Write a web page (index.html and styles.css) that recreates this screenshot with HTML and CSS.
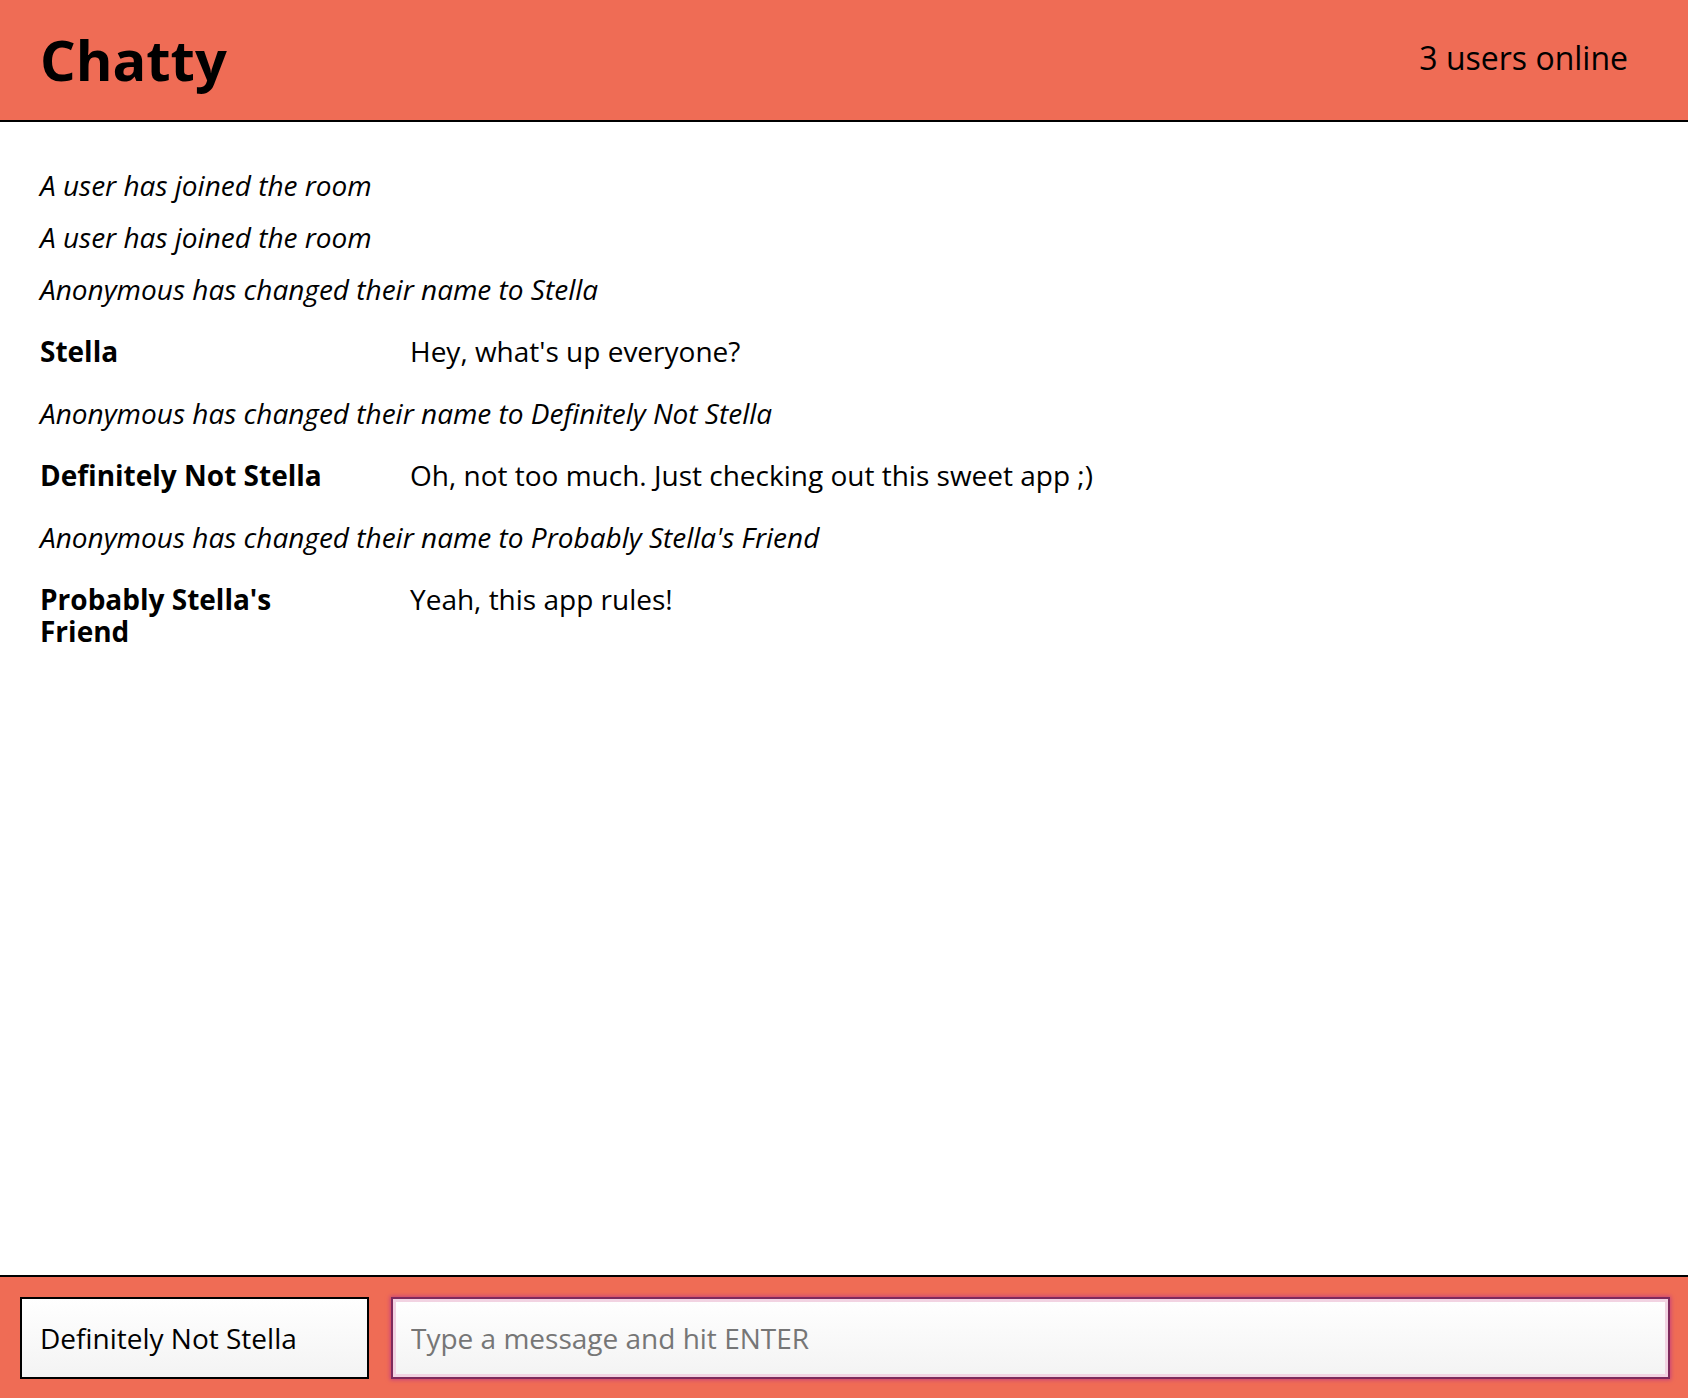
FILE: index.html
```html
<!DOCTYPE html>
<html>
<head>
<meta charset="utf-8">
<title>Chatty</title>
<link rel="stylesheet" href="styles.css">
</head>
<body>
<div class="app">
  <nav class="navbar">
    <a class="brand" href="#">Chatty</a>
    <span class="online">3 users online</span>
  </nav>
  <main class="messages">
    <div class="message system">A user has joined the room</div>
    <div class="message system">A user has joined the room</div>
    <div class="message system">Anonymous has changed their name to Stella</div>
    <div class="message user">
      <span class="username">Stella</span>
      <span class="content">Hey, what's up everyone?</span>
    </div>
    <div class="message system">Anonymous has changed their name to Definitely Not Stella</div>
    <div class="message user">
      <span class="username">Definitely Not Stella</span>
      <span class="content">Oh, not too much. Just checking out this sweet app ;)</span>
    </div>
    <div class="message system">Anonymous has changed their name to Probably Stella's Friend</div>
    <div class="message user">
      <span class="username">Probably Stella's Friend</span>
      <span class="content">Yeah, this app rules!</span>
    </div>
  </main>
  <footer class="chatbar">
    <input class="chatbar-username" type="text" value="Definitely Not Stella">
    <input class="chatbar-message" type="text" placeholder="Type a message and hit ENTER">
  </footer>
</div>
</body>
</html>
```
FILE: styles.css
```css
* { box-sizing: border-box; }
html, body {
  margin: 0;
  padding: 0;
  height: 100%;
}
body {
  font-family: "Open Sans", "Liberation Sans", sans-serif;
  font-size: 28px;
  color: #000;
  background: #fff;
}
.app {
  display: flex;
  flex-direction: column;
  height: 100vh;
}
.navbar {
  flex: 0 0 auto;
  height: 122px;
  background: #ef6c55;
  border-bottom: 2px solid #000;
  display: flex;
  justify-content: space-between;
  align-items: flex-start;
  padding: 0 60px 0 40px;
}
.brand {
  color: #000;
  text-decoration: none;
  font-weight: 700;
  font-size: 56px;
  line-height: 1;
  margin-top: 31px;
}
.online {
  font-size: 32px;
  line-height: 1;
  margin-top: 42px;
}
.messages {
  flex: 1 1 auto;
  padding: 37px 40px 0;
  overflow: auto;
}
.message {
  display: flex;
  line-height: 32px;
}
.message.system {
  font-style: italic;
  padding: 10px 0;
}
.message.user {
  padding: 20px 0;
}
.username {
  flex: 0 0 300px;
  margin-right: 70px;
  font-weight: 700;
}
.content {
  flex: 1 1 auto;
}
.chatbar {
  flex: 0 0 auto;
  height: 123px;
  background: #ef6c55;
  border-top: 2px solid #000;
  display: flex;
  align-items: center;
  gap: 22px;
  padding: 0 18px 0 20px;
}
.chatbar input {
  height: 82px;
  min-width: 0;
  font-family: "Open Sans", "Liberation Sans", sans-serif;
  font-size: 28px;
  color: #000;
  padding: 0 18px;
  background: linear-gradient(#ffffff, #f3f3f3);
  outline: none;
}
.chatbar-username {
  flex: 0 0 349px;
  width: 349px;
  border: 2px solid #000;
}
.chatbar-message {
  flex: 1 1 auto;
  width: auto;
  border: 2px solid #7e2a5c;
  box-shadow: 0 0 4px 1px #c9447a, inset 0 0 0 3px #f2d3e2;
}
.chatbar-message::placeholder {
  color: #767676;
}
```
